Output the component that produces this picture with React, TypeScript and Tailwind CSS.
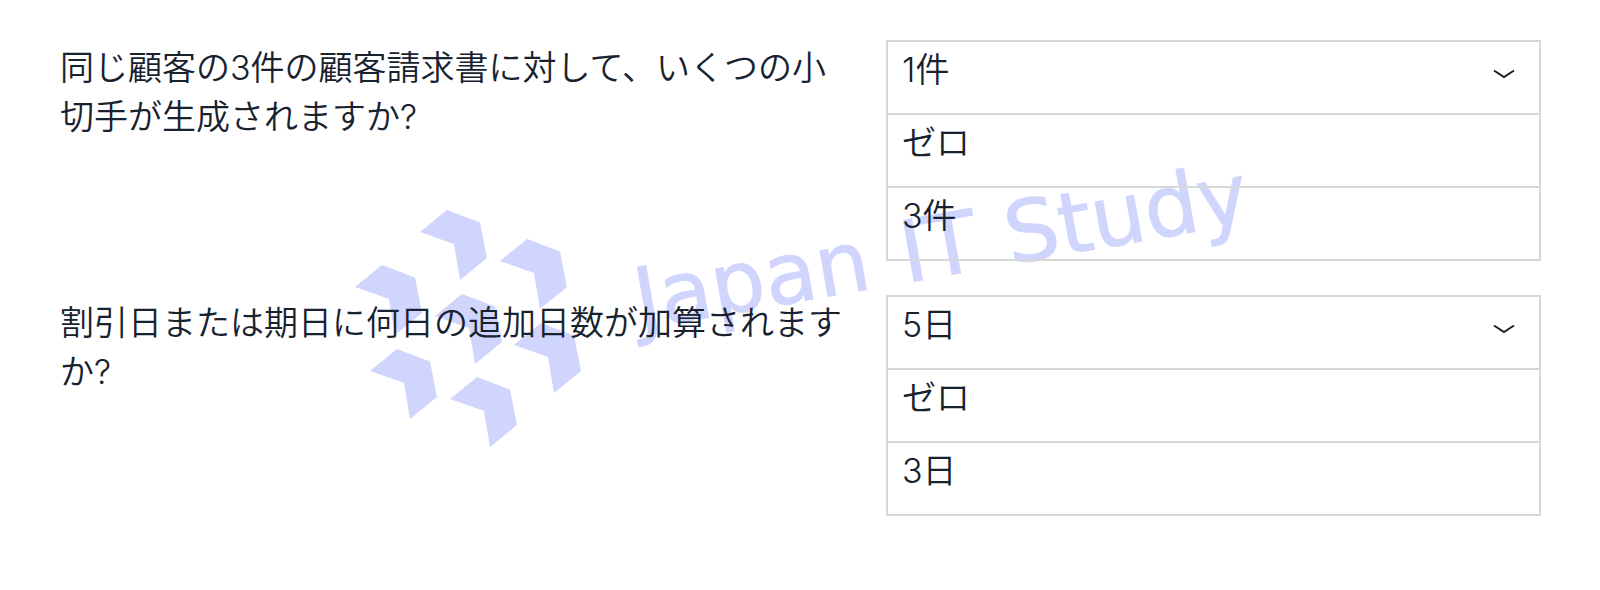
import { useState } from "react";

type Question = {
  id: string;
  text: string;
  options: string[];
};

const QUESTIONS: Question[] = [
  {
    id: "checks",
    text: "同じ顧客の3件の顧客請求書に対して、いくつの小切手が生成されますか?",
    options: ["1件", "ゼロ", "3件"],
  },
  {
    id: "days",
    text: "割引日または期日に何日の追加日数が加算されますか?",
    options: ["5日", "ゼロ", "3日"],
  },
];

// left tip of every arrow in the logo
const ARROWS = [
  [420, 232],
  [500, 261],
  [355, 287],
  [435, 316],
  [514, 345],
  [370, 371],
  [450, 399],
];

function Watermark() {
  return (
    <svg
      viewBox="350 100 980 360"
      className="absolute left-[350px] top-[100px] w-[980px] h-[360px] overflow-visible -z-10 pointer-events-none fill-[#d0d5fd]"
      aria-hidden="true"
    >
      {ARROWS.map(([x, y]) => (
        <polygon key={`${x}-${y}`} points="0,0 27,-22 60,-9.5 67,26 40,48 34,12" transform={`translate(${x} ${y})`} />
      ))}
      <g
        transform="translate(643 329) rotate(-10)"
        className="font-['DejaVu_Sans',sans-serif] font-normal text-[85px] stroke-[#d0d5fd] stroke-1"
      >
        <text x="-3" y="0">Japan</text>
        <text x="267" y="0">IT</text>
        <text x="373" y="0">Study</text>
      </g>
    </svg>
  );
}

function AnswerSelect({ question }: { question: Question }) {
  const [value, setValue] = useState(question.options[0]);
  const rest = question.options.filter((option) => option !== value);

  return (
    <div className="border-2 border-[#d8d8d8] divide-y-2 divide-[#d8d8d8]">
      <div className="relative">
        <select
          id={question.id}
          value={value}
          onChange={(e) => setValue(e.target.value)}
          className="block w-full h-[71px] appearance-none bg-transparent pl-[14px] pr-16 pb-4 leading-[49px] outline-none"
        >
          {question.options.map((option) => (
            <option key={option}>{option}</option>
          ))}
        </select>
        <svg
          viewBox="0 0 22 10"
          className="absolute right-6 top-[27px] w-[22px] h-[10px] pointer-events-none"
          fill="none"
          stroke="currentColor"
          strokeWidth="2"
          aria-hidden="true"
        >
          <path d="M1 1.5 11 8 21 1.5" />
        </svg>
      </div>
      {rest.map((option) => (
        <div key={option}>
          <button
            type="button"
            onClick={() => setValue(option)}
            className="block w-full h-[71px] pl-[14px] pb-4 text-left leading-[49px]"
          >
            {option}
          </button>
        </div>
      ))}
    </div>
  );
}

export default function App() {
  return (
    <main className="relative isolate min-h-screen bg-white pl-15 pr-[59px] py-10 text-[34px] leading-[49px] font-[350] text-[#18222f] font-['Inter','Noto_Sans_CJK_JP',sans-serif]">
      <Watermark />
      <form className="flex flex-col gap-[34px]">
        {QUESTIONS.map((question) => (
          <div key={question.id} className="grid grid-cols-[786fr_655fr] gap-10">
            <label htmlFor={question.id} className="pt-[3px]">
              {question.text}
            </label>
            <AnswerSelect question={question} />
          </div>
        ))}
      </form>
    </main>
  );
}
